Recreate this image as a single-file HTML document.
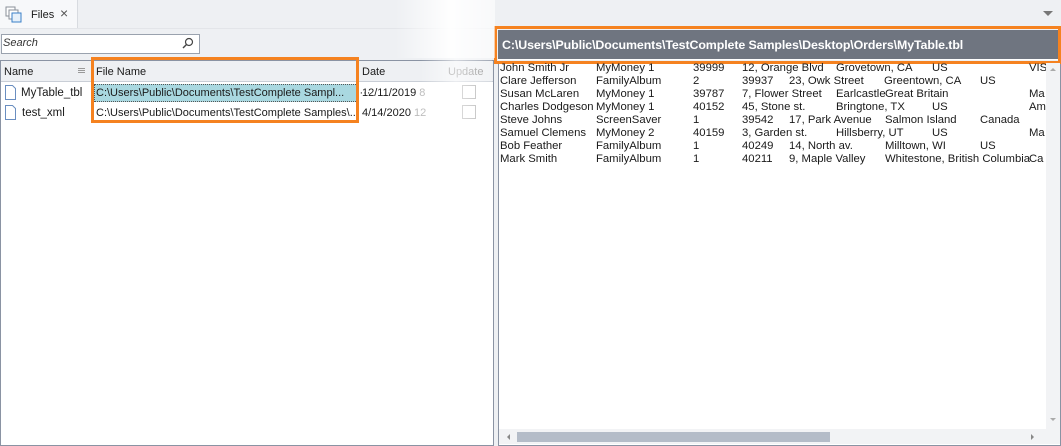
<!DOCTYPE html>
<html><head><meta charset="utf-8"><style>
*{margin:0;padding:0;box-sizing:border-box}
body{width:1061px;height:446px;overflow:hidden;background:#eef0f3;font-family:"Liberation Sans",Tahoma,sans-serif;font-size:11px;color:#1a1a1a;position:relative}
.a{position:absolute;white-space:nowrap}
.d .a{font-size:11.3px}
</style></head><body>
<div class="a" style="left:0;top:0;width:78px;height:28px;background:#f7f8fa;border-right:1px solid #d8dbe0"></div>
<svg class="a" style="left:5px;top:6px" width="18" height="18" viewBox="0 0 18 18"><rect x="1" y="1" width="9" height="9" fill="#fff" stroke="#8a8f98"/><rect x="4" y="4" width="9" height="9" fill="#fff" stroke="#8a8f98"/><rect x="7" y="7" width="9" height="9" fill="#e6f0fa" stroke="#3a7fc8"/></svg>
<div class="a" style="left:31px;top:9px;font-size:11px">Files</div>
<div class="a" style="left:60px;top:5px;font-size:14px;color:#555">×</div>
<div class="a" style="left:0;top:28px;width:1061px;height:1px;background:#e3e5e9"></div>
<div class="a" style="left:1043px;top:11px;width:0;height:0;border-left:5px solid transparent;border-right:5px solid transparent;border-top:5px solid #777"></div>
<div class="a" style="left:1px;top:34px;width:199px;height:20px;background:#fff;border:1px solid #9aa2ae"></div>
<div class="a" style="left:3px;top:37px;font-style:italic;font-size:11px;color:#333">Search</div>
<svg class="a" style="left:182px;top:37px" width="12" height="12" viewBox="0 0 12 12"><circle cx="7" cy="5" r="3.5" fill="none" stroke="#444" stroke-width="1.2"/><line x1="4.5" y1="7.5" x2="1" y2="11" stroke="#444" stroke-width="1.4"/></svg>
<div class="a" style="left:0;top:60px;width:494px;height:386px;background:#fff;border:1px solid #8a93a3"></div>
<div class="a" style="left:1px;top:61px;width:492px;height:21px;background:#eef0f3;border-bottom:1px solid #c9ced6"></div>
<div class="a" style="left:91px;top:61px;width:1px;height:21px;background:#d0d4da"></div>
<div class="a" style="left:358px;top:61px;width:1px;height:21px;background:#d0d4da"></div>
<div class="a" style="left:4px;top:66px">Name</div>
<div class="a" style="left:78px;top:68px;width:7px;height:1px;background:#999;box-shadow:0 2px 0 #999,0 4px 0 #999"></div>
<div class="a" style="left:96px;top:66px">File Name</div>
<div class="a" style="left:362px;top:66px">Date</div>
<div class="a" style="left:448px;top:66px;color:#888">Update</div>
<svg class="a" style="left:4px;top:85px" width="13" height="15" viewBox="0 0 13 15"><path d="M1.5 .5h7l3 3v11h-10z" fill="#fff" stroke="#6a8ec0"/></svg>
<svg class="a" style="left:4px;top:105px" width="13" height="15" viewBox="0 0 13 15"><path d="M1.5 .5h7l3 3v11h-10z" fill="#fff" stroke="#6a8ec0"/></svg>
<div class="a" style="left:21px;top:87px;font-size:11.5px">MyTable_tbl</div>
<div class="a" style="left:22px;top:107px;font-size:11.5px">test_xml</div>
<div class="a" style="left:94px;top:84px;width:264px;height:18px;background:#a9d8e0;border:1px dotted #555"></div>
<div class="a" style="left:96px;top:87px">C:\Users\Public\Documents\TestComplete Sampl...&nbsp;&nbsp;&nbsp;&nbsp;&nbsp;···</div>
<div class="a" style="left:96px;top:107px">C:\Users\Public\Documents\TestComplete Samples\...</div>
<div class="a" style="left:362px;top:87px">12/11/2019 <span style="color:#bbb">8</span></div>
<div class="a" style="left:362px;top:107px">4/14/2020 <span style="color:#bbb">12</span></div>
<div class="a" style="left:462px;top:85px;width:14px;height:14px;border:1px solid #aaa;background:#fff"></div>
<div class="a" style="left:462px;top:105px;width:14px;height:14px;border:1px solid #aaa;background:#fff"></div>
<div class="a" style="left:91px;top:57px;width:268px;height:66px;border:3px solid #f58220"></div>
<div class="a" style="left:498px;top:62px;width:563px;height:384px;background:#fff;border:1px solid #8a93a3"></div>
<div class="a" style="left:494px;top:26px;width:567px;height:38px;border:3px solid #f58220"></div>
<div class="a" style="left:498px;top:30px;width:560px;height:30px;background:#6f7580;border-bottom:1px solid #fff"></div>
<div class="a" style="left:502px;top:38px;color:#fff;font-weight:bold;font-size:12.4px;letter-spacing:-0.1px">C:\Users\Public\Documents\TestComplete Samples\Desktop\Orders\MyTable.tbl</div>
<div class="a" style="left:1046px;top:63px;width:14px;height:366px;background:#f2f3f5"></div>
<div class="a" style="left:499px;top:429px;width:561px;height:15px;background:#f2f3f5"></div>
<div class="a" style="left:517px;top:432px;width:313px;height:10px;background:#b4bcc8"></div>
<div class="a" style="left:507px;top:434px;width:0;height:0;border-top:3px solid transparent;border-bottom:3px solid transparent;border-right:3px solid #888"></div>
<div class="a" style="left:1031px;top:434px;width:0;height:0;border-top:3px solid transparent;border-bottom:3px solid transparent;border-left:3px solid #888"></div>
<div class="a" style="left:1050px;top:68px;width:0;height:0;border-left:3px solid transparent;border-right:3px solid transparent;border-bottom:3px solid #aaa"></div>
<div class="a" style="left:1050px;top:418px;width:0;height:0;border-left:3px solid transparent;border-right:3px solid transparent;border-top:3px solid #aaa"></div>
<div class="d" style="position:absolute;left:0;top:0;width:1046px;height:170px;overflow:hidden">
<div class="a" style="top:62px;left:500px">John Smith Jr</div><div class="a" style="top:62px;left:596px">MyMoney 1</div><div class="a" style="top:62px;left:693px">39999</div><div class="a" style="top:62px;left:742px">12, Orange Blvd</div><div class="a" style="top:62px;left:836px">Grovetown, CA</div><div class="a" style="top:62px;left:932px">US</div><div class="a" style="top:62px;left:1029px">VIS</div>
<div class="a" style="top:75px;left:500px">Clare Jefferson</div><div class="a" style="top:75px;left:596px">FamilyAlbum</div><div class="a" style="top:75px;left:693px">2</div><div class="a" style="top:75px;left:742px">39937</div><div class="a" style="top:75px;left:789px">23, Owk Street</div><div class="a" style="top:75px;left:884px">Greentown, CA</div><div class="a" style="top:75px;left:980px">US</div>
<div class="a" style="top:88px;left:500px">Susan McLaren</div><div class="a" style="top:88px;left:596px">MyMoney 1</div><div class="a" style="top:88px;left:693px">39787</div><div class="a" style="top:88px;left:742px">7, Flower Street</div><div class="a" style="top:88px;left:836px">Earlcastle</div><div class="a" style="top:88px;left:885px">Great Britain</div><div class="a" style="top:88px;left:1029px">Ma</div>
<div class="a" style="top:101px;left:500px">Charles Dodgeson</div><div class="a" style="top:101px;left:596px">MyMoney 1</div><div class="a" style="top:101px;left:693px">40152</div><div class="a" style="top:101px;left:742px">45, Stone st.</div><div class="a" style="top:101px;left:836px">Bringtone, TX</div><div class="a" style="top:101px;left:932px">US</div><div class="a" style="top:101px;left:1029px">Am</div>
<div class="a" style="top:114px;left:500px">Steve Johns</div><div class="a" style="top:114px;left:596px">ScreenSaver</div><div class="a" style="top:114px;left:693px">1</div><div class="a" style="top:114px;left:742px">39542</div><div class="a" style="top:114px;left:789px">17, Park Avenue</div><div class="a" style="top:114px;left:885px">Salmon Island</div><div class="a" style="top:114px;left:980px">Canada</div>
<div class="a" style="top:127px;left:500px">Samuel Clemens</div><div class="a" style="top:127px;left:596px">MyMoney 2</div><div class="a" style="top:127px;left:693px">40159</div><div class="a" style="top:127px;left:742px">3, Garden st.</div><div class="a" style="top:127px;left:836px">Hillsberry, UT</div><div class="a" style="top:127px;left:932px">US</div><div class="a" style="top:127px;left:1029px">Ma</div>
<div class="a" style="top:140px;left:500px">Bob Feather</div><div class="a" style="top:140px;left:596px">FamilyAlbum</div><div class="a" style="top:140px;left:693px">1</div><div class="a" style="top:140px;left:742px">40249</div><div class="a" style="top:140px;left:789px">14, North av.</div><div class="a" style="top:140px;left:885px">Milltown, WI</div><div class="a" style="top:140px;left:980px">US</div>
<div class="a" style="top:153px;left:500px">Mark Smith</div><div class="a" style="top:153px;left:596px">FamilyAlbum</div><div class="a" style="top:153px;left:693px">1</div><div class="a" style="top:153px;left:742px">40211</div><div class="a" style="top:153px;left:789px">9, Maple Valley</div><div class="a" style="top:153px;left:885px">Whitestone, British Columbia</div><div class="a" style="top:153px;left:1029px">Ca</div>
</div>
<div class="a" style="left:395px;top:0;width:100px;height:58px;background:linear-gradient(90deg,rgba(255,255,255,0),rgba(255,255,255,.95) 55%,rgba(255,255,255,.6))"></div>
<div class="a" style="left:420px;top:58px;width:72px;height:70px;background:linear-gradient(90deg,rgba(255,255,255,0),rgba(255,255,255,.6) 50%,rgba(255,255,255,.2))"></div>
</body></html>
